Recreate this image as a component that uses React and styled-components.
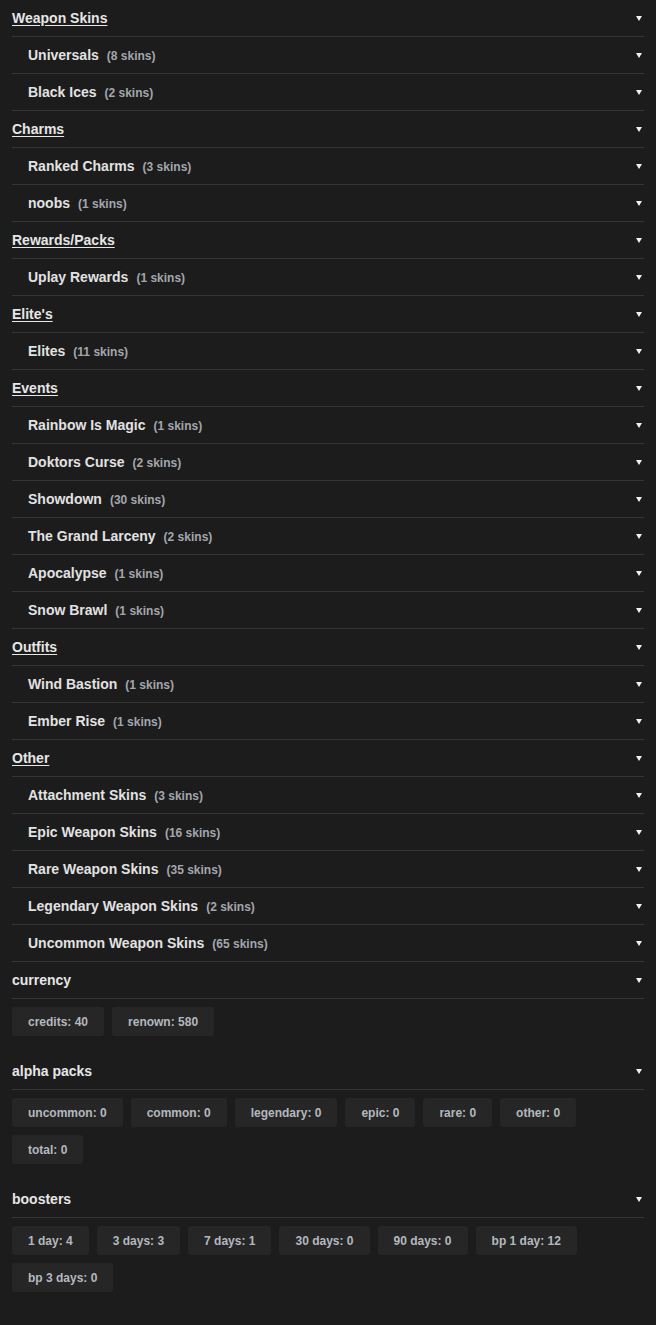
import styled, { createGlobalStyle } from 'styled-components';

const groups = [
  { title: 'Weapon Skins', items: [['Universals', 8], ['Black Ices', 2]] },
  { title: 'Charms', items: [['Ranked Charms', 3], ['noobs', 1]] },
  { title: 'Rewards/Packs', items: [['Uplay Rewards', 1]] },
  { title: "Elite's", items: [['Elites', 11]] },
  {
    title: 'Events',
    items: [
      ['Rainbow Is Magic', 1],
      ['Doktors Curse', 2],
      ['Showdown', 30],
      ['The Grand Larceny', 2],
      ['Apocalypse', 1],
      ['Snow Brawl', 1],
    ],
  },
  { title: 'Outfits', items: [['Wind Bastion', 1], ['Ember Rise', 1]] },
  {
    title: 'Other',
    items: [
      ['Attachment Skins', 3],
      ['Epic Weapon Skins', 16],
      ['Rare Weapon Skins', 35],
      ['Legendary Weapon Skins', 2],
      ['Uncommon Weapon Skins', 65],
    ],
  },
];

const stats = [
  { title: 'currency', chips: ['credits: 40', 'renown: 580'] },
  {
    title: 'alpha packs',
    chips: ['uncommon: 0', 'common: 0', 'legendary: 0', 'epic: 0', 'rare: 0', 'other: 0', 'total: 0'],
  },
  {
    title: 'boosters',
    chips: ['1 day: 4', '3 days: 3', '7 days: 1', '30 days: 0', '90 days: 0', 'bp 1 day: 12', 'bp 3 days: 0'],
  },
];

function App() {
  return (
    <>
      <GlobalStyle />
      <Page>
        {groups.map((g) => (
          <div key={g.title}>
            <Row>
              <Title $underline>{g.title}</Title>
              <Arrow />
            </Row>
            {g.items.map(([name, count]) => (
              <Row key={name} $sub>
                <Name>
                  {name}
                  <Count>({count} skins)</Count>
                </Name>
                <Arrow />
              </Row>
            ))}
          </div>
        ))}
        {stats.map((s) => (
          <div key={s.title}>
            <Row>
              <Title>{s.title}</Title>
              <Arrow />
            </Row>
            <Chips>
              {s.chips.map((c) => (
                <Chip key={c}>{c}</Chip>
              ))}
            </Chips>
          </div>
        ))}
      </Page>
    </>
  );
}

export default App;

const GlobalStyle = createGlobalStyle`
  html, body {
    margin: 0;
    background: #1c1c1c;
  }
  body {
    font-family: "Liberation Sans", Arial, sans-serif;
  }
`;

const Page = styled.div`
  min-height: 100vh;
  padding: 0 12px;
  box-sizing: border-box;
  background: #1c1c1c;
`;

const Row = styled.div`
  display: flex;
  align-items: center;
  justify-content: space-between;
  height: 36px;
  padding: 0 2px 0 ${(p) => (p.$sub ? '16px' : '0')};
  border-bottom: 1px solid #353535;
`;

const Title = styled.span`
  font-size: 14px;
  font-weight: 700;
  color: #e6e6e6;
  text-decoration: ${(p) => (p.$underline ? 'underline' : 'none')};
  text-underline-offset: 2px;
`;

const Name = styled.span`
  font-size: 14px;
  font-weight: 700;
  color: #e2e2e2;
`;

const Count = styled.span`
  margin-left: 8px;
  font-size: 12px;
  font-weight: 700;
  color: #a3a7ad;
`;

const Arrow = styled.span`
  width: 0;
  height: 0;
  border-left: 3.5px solid transparent;
  border-right: 3.5px solid transparent;
  border-top: 5px solid #f0f2f5;
`;

const Chips = styled.div`
  display: flex;
  flex-wrap: wrap;
  gap: 8px;
  padding: 8px 0 17px;
`;

const Chip = styled.div`
  display: flex;
  align-items: center;
  height: 29px;
  padding: 0 16px;
  border-radius: 3px;
  background: #262626;
  font-size: 12px;
  font-weight: 700;
  color: #b4b8bf;
`;
